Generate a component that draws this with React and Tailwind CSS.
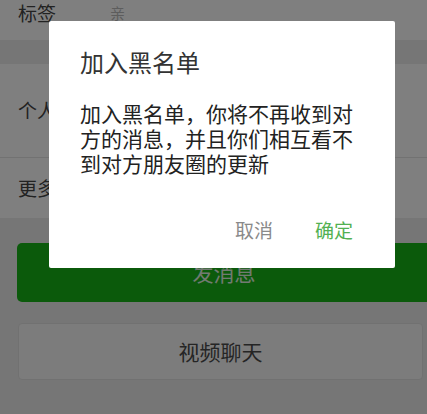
import React from "react";

const font = { fontFamily: '"Noto Sans CJK SC", "Noto Sans", sans-serif' };

function ProfilePage() {
  return (
    <div className="w-full h-full bg-[#ececec]">
      {/* 标签 */}
      <div className="h-[40px] bg-white flex items-start pt-[3px]">
        <span className="ml-[18px] text-[19px] leading-[19px] text-[#444]">标签</span>
        <span className="ml-[54px] text-[15px] leading-[19px] text-[#bbb]">亲</span>
      </div>

      <div className="h-[24px]" />

      {/* 个人相册 */}
      <div className="bg-white">
        <div className="h-[94px] flex items-center pl-[18px] border-b border-[#e5e5e5]">
          <span className="text-[19px] text-[#444]">个人相册</span>
        </div>
        <div className="h-[60px] flex items-center pl-[18px]">
          <span className="text-[19px] text-[#444]">更多</span>
        </div>
      </div>

      <div className="pt-[25px] flex flex-col gap-[21px]">
        <button className="ml-[17px] mr-[-4px] h-[59px] rounded-[5px] bg-[#17b417] text-[21px] text-[#e4f4e4]">
          发消息
        </button>
        <button className="ml-[18px] mr-[4px] h-[57px] rounded-[4px] bg-[#f8f8f8] border border-[#e2e2e2] text-[21px] text-[#4a4a4a]">
          视频聊天
        </button>
      </div>
    </div>
  );
}

function BlacklistDialog() {
  return (
    <div className="absolute left-[49px] top-[21px] w-[346px] h-[247px] bg-white rounded-[2px] flex flex-col">
      <div className="pl-[31px] pt-[26px] text-[24px] leading-[30px] text-[#333]">加入黑名单</div>
      <div className="pl-[31px] pr-[31px] pt-[24px] text-[21px] leading-[25px] text-[#222]">
        加入黑名单，你将不再收到对方的消息，并且你们相互看不到对方朋友圈的更新
      </div>
      <div className="mt-auto mb-[26px] flex justify-end gap-[42px] pr-[42px] text-[19px] leading-[24px]">
        <span className="text-[#8a8a8a]">取消</span>
        <span className="text-[#52b152]">确定</span>
      </div>
    </div>
  );
}

export default function App() {
  return (
    <div className="relative w-[427px] h-[414px] overflow-hidden" style={font}>
      <ProfilePage />
      <div className="absolute inset-0 bg-black/50" />
      <BlacklistDialog />
    </div>
  );
}
